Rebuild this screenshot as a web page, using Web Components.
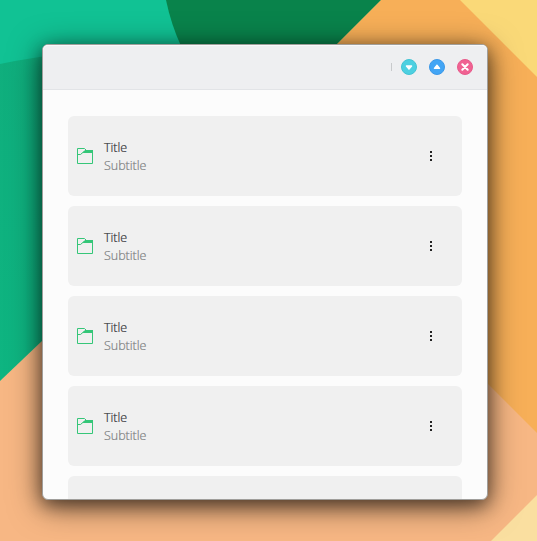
<!DOCTYPE html>
<html lang="en">
<head>
<meta charset="utf-8">
<title>List window</title>
<style>
html, body { margin: 0; height: 100%; overflow: hidden; }
</style>
</head>
<body>
<desk-top>
  <app-window>
    <window-controls slot="header"></window-controls>
    <list-card><span slot="title">Title</span><span slot="subtitle">Subtitle</span></list-card>
    <list-card><span slot="title">Title</span><span slot="subtitle">Subtitle</span></list-card>
    <list-card><span slot="title">Title</span><span slot="subtitle">Subtitle</span></list-card>
    <list-card><span slot="title">Title</span><span slot="subtitle">Subtitle</span></list-card>
    <list-card></list-card>
  </app-window>
</desk-top>
<script>
function define(name, html) {
  const template = document.createElement('template');
  template.innerHTML = html;
  customElements.define(name, class extends HTMLElement {
    constructor() {
      super();
      this.attachShadow({ mode: 'open' }).append(template.content.cloneNode(true));
    }
  });
}

define('desk-top', `
<style>
:host { display: grid; box-sizing: border-box; width: 537px; height: 541px; padding: 44px 49px 41px 42px; position: relative; overflow: hidden; background: #f7b784; font-family: "Open Sans", "Noto Sans", sans-serif; }
.wallpaper { position: absolute; inset: 0; }
::slotted(*) { position: relative; }
</style>
<svg class="wallpaper" width="537" height="541" viewBox="0 0 537 541">
  <defs><linearGradient id="g" x1="0" y1="0" x2="0" y2="1"><stop offset="0" stop-color="#10ad7c"/><stop offset="1" stop-color="#0eb581"/></linearGradient></defs>
  <path d="M0 0H400L0 381Z" fill="url(#g)"/>
  <path d="M0 0H200V50Q90 45 0 64Z" fill="#11c294"/>
  <path d="M166 0Q171 24 181 46H335L381 0Z" fill="#09834b"/>
  <path d="M381 0H537V433L320 216V61Z" fill="#f7af58"/>
  <path d="M460 0H537V77Z" fill="#fad978"/>
  <path d="M537 495V541H491Z" fill="#fadfa0"/>
</svg>
<slot></slot>`);

define('app-window', `
<style>
:host { display: grid; grid-template-rows: 45px minmax(0, 1fr); box-sizing: border-box; min-height: 0; border: 1px solid #a09e9b; border-radius: 6px; background: #fcfcfc; box-shadow: 0 6px 32px rgba(0,0,0,.55), 0 5px 17px rgba(0,0,0,.46); }
header { display: flex; align-items: center; justify-content: flex-end; padding-right: 14px; background: #eeeff1; border-bottom: 1px solid #e2e4e7; border-radius: 5px 5px 0 0; box-shadow: inset 0 1px #f8f9fa; }
main { display: flex; flex-direction: column; gap: 10px; padding: 26px 25px 0; overflow: hidden; border-radius: 0 0 5px 5px; min-height: 0; box-sizing: border-box; }
</style>
<header><slot name="header"></slot></header>
<main><slot></slot></main>`);

define('window-controls', `
<style>
:host { display: flex; align-items: center; gap: 12px; }
i { width: 1px; height: 8px; background: #c8cacc; margin-right: -3px; }
svg { display: block; width: 16px; height: 16px; }
</style>
<i></i>
<svg viewBox="0 0 16 16"><circle cx="8" cy="8" r="7.5" fill="#4dd0e1" stroke="#43c4d4"/><path d="M5.4 7h5.2L8 10.2Z" fill="#fff" stroke="#fff" stroke-width="1.3" stroke-linejoin="round"/></svg>
<svg viewBox="0 0 16 16"><circle cx="8" cy="8" r="7.5" fill="#42a5f5" stroke="#3c98e8"/><path d="M5.4 9.3h5.2L8 6.1Z" fill="#fff" stroke="#fff" stroke-width="1.3" stroke-linejoin="round"/></svg>
<svg viewBox="0 0 16 16"><circle cx="8" cy="8" r="7.5" fill="#f06292" stroke="#e85a8b"/><path d="M5.3 5.3l5.4 5.4m0-5.4l-5.4 5.4" fill="none" stroke="#fff" stroke-width="2" stroke-linecap="round"/></svg>`);

define('list-card', `
<style>
:host { display: grid; grid-template-columns: 18px 1fr 16px; align-items: center; column-gap: 9px; box-sizing: border-box; height: 80px; flex: none; padding: 0 23px 0 8px; border-radius: 6px; background: #f0f0f0; }
svg { display: block; }
.text { font-size: 13.5px; font-weight: 300; line-height: 18px; margin-left: 1px; transform: scaleX(.925); transform-origin: 0 0; -webkit-text-stroke: .2px; }
.title { color: #2c2e32; }
.subtitle { color: #7a7c7e; }
</style>
<svg width="18" height="18" viewBox="0 0 18 18"><path d="M1.5 1.5H8.5L10.5 3.5H16.5V16.5H1.5Z" fill="none" stroke="#35c678"/><path d="M1.5 7.5H4.5L8 4.5" fill="none" stroke="#35c678"/><path d="M9 3H17V6H6.5Z" fill="#35c678"/></svg>
<div class="text"><div class="title"><slot name="title"></slot></div><div class="subtitle"><slot name="subtitle"></slot></div></div>
<svg width="16" height="16" viewBox="0 0 16 16"><path d="M7 3h2v2H7zM7 7h2v2H7zM7 11h2v2H7z" fill="#232323"/></svg>`);
</script>
</body>
</html>
